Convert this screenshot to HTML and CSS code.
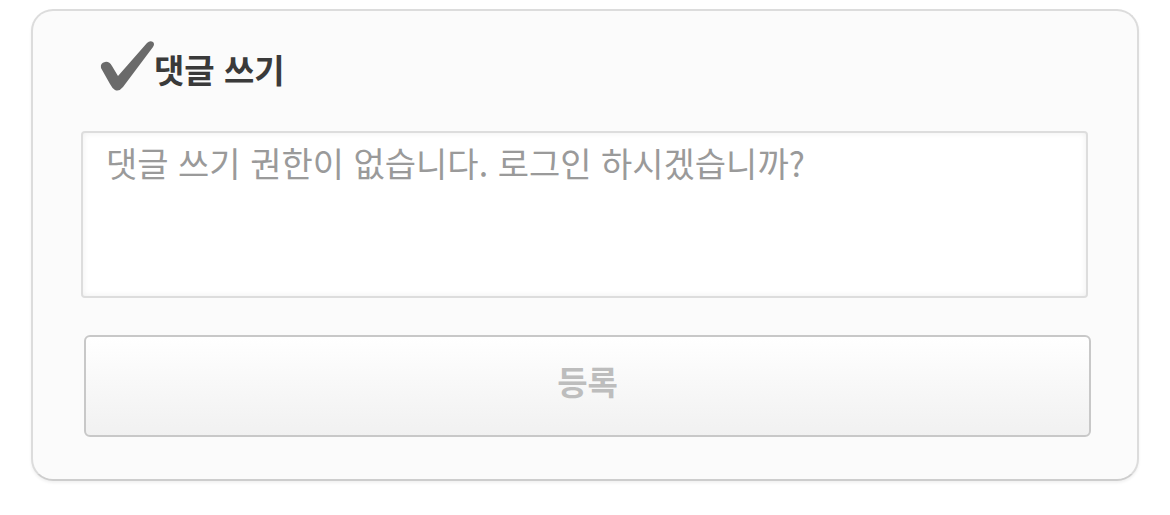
FILE: index.html
```html
<!DOCTYPE html>
<html lang="ko">
<head>
<meta charset="utf-8">
<link rel="stylesheet" href="styles.css">
</head>
<body>
<div class="page">
  <section class="panel">
    <h2 class="title">
      <svg class="check" width="56" height="52" viewBox="0 0 56 52"><path d="M1 28 Q0 23 5 22 Q9 21 12 26 L18 36 L47 3 Q50 0 53 2 Q55 4 53 7 L23 47 Q19 52 15 50 Q12 48 10 44 Z" fill="#6a6a6a"/></svg>
      <span>댓글 쓰기</span>
    </h2>
    <textarea class="comment" placeholder="댓글 쓰기 권한이 없습니다. 로그인 하시겠습니까?" readonly></textarea>
    <button class="submit" type="button">등록</button>
  </section>
</div>
</body>
</html>
```
FILE: styles.css
```css
html, body {
  margin: 0;
  padding: 0;
  background: #fff;
}
.page {
  padding: 9px 31px;
  font-family: "Noto Sans CJK KR", "Noto Sans", sans-serif;
}
.panel {
  box-sizing: border-box;
  height: 472px;
  border: 2px solid #dcdcdc;
  border-bottom-color: #cdcdcd;
  border-radius: 22px;
  background: #fbfbfb;
  box-shadow: 0 2px 3px rgba(0,0,0,0.06);
  padding: 29px 0 0 0;
  display: flex;
  flex-direction: column;
}
.title {
  margin: 0 0 0 67px;
  height: 52px;
  display: flex;
  align-items: flex-end;
  font-size: 33px;
  font-weight: bold;
  color: #3a3a3a;
  line-height: 1;
}
.title .check {
  display: block;
  flex: none;
}
.title span {
  margin-left: -2px;
  padding-bottom: 6px;
}
.comment {
  display: block;
  box-sizing: border-box;
  margin: 39px 49px 0 48px;
  height: 167px;
  resize: none;
  border: 2px solid #dddddd;
  border-radius: 4px;
  background: #fff;
  box-shadow: inset 0 0 6px rgba(0,0,0,0.07);
  padding: 10px 23px;
  font-family: inherit;
  font-size: 34px;
  line-height: 1.2;
  color: #333;
  outline: none;
}
.comment::placeholder {
  color: #9a9a9a;
}
.submit {
  display: block;
  box-sizing: border-box;
  margin: 37px 46px 0 51px;
  height: 102px;
  border: 2px solid #c8c8c8;
  border-radius: 6px;
  background: linear-gradient(#ffffff, #f1f1f1);
  font-family: inherit;
  font-size: 33px;
  font-weight: bold;
  color: #bdbdbd;
  padding: 0 0 10px 0;
}
```
